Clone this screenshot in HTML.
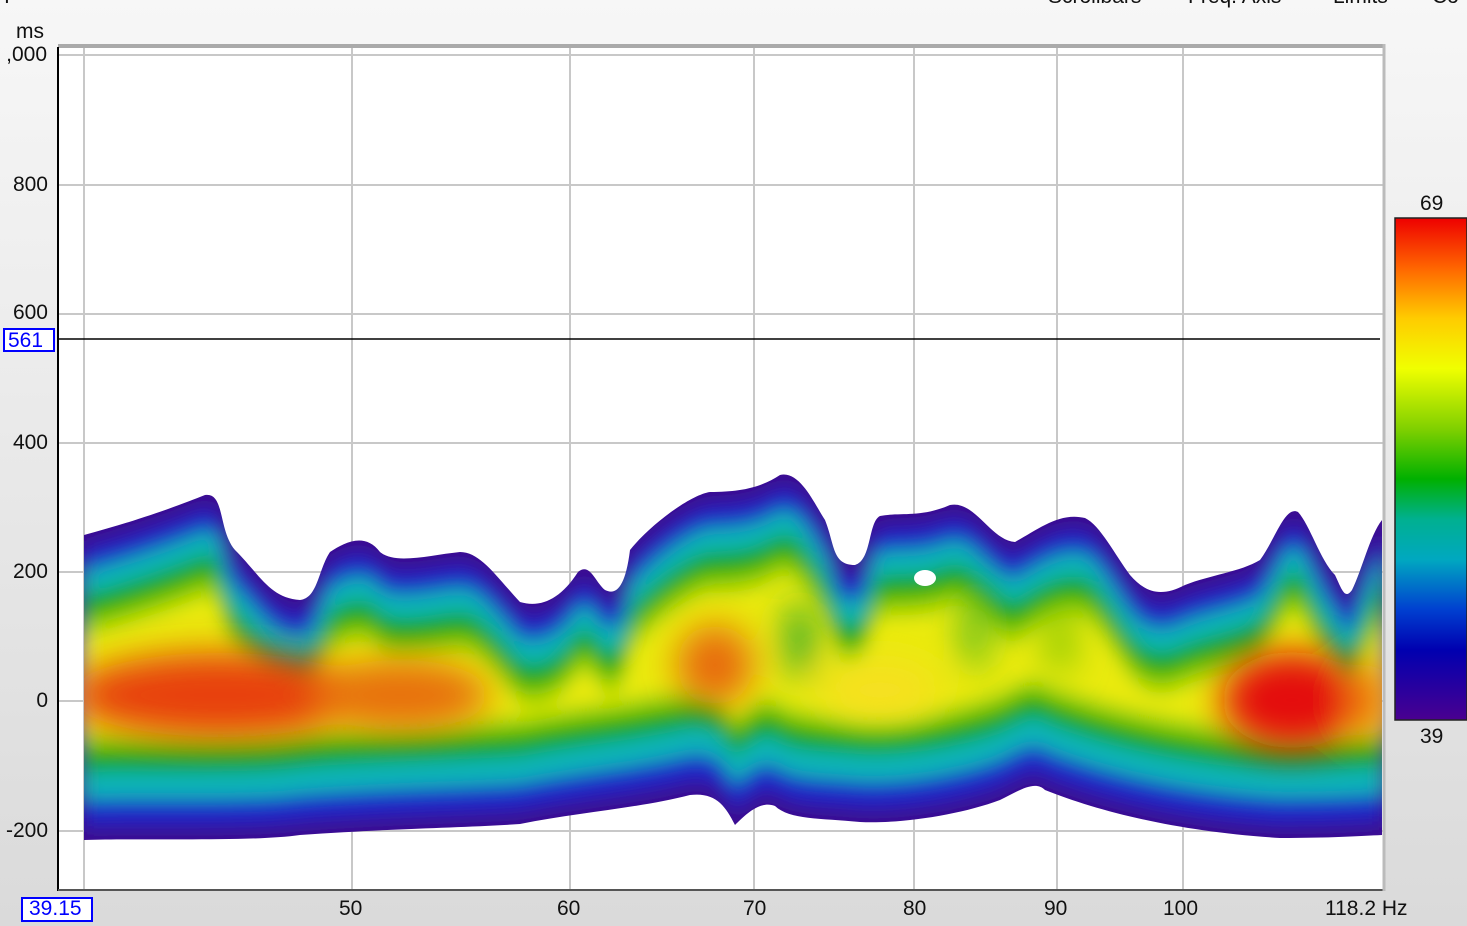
<!DOCTYPE html>
<html><head><meta charset="utf-8"><style>
html,body{margin:0;padding:0}
body{width:1467px;height:926px;overflow:hidden;background:linear-gradient(#f7f7f7,#dadada);font-family:"Liberation Sans",sans-serif;position:relative}
.t{position:absolute;font-size:21px;color:#111;line-height:24px}
</style></head><body>
<svg width="1467" height="926" style="position:absolute;left:0;top:0">
<defs>
<path id="top" d="M84,535 C140,520 180,505 205,495 C225,492 218,530 235,550 C260,575 270,598 300,600 C318,598 318,570 330,552 C345,542 365,532 380,552 C395,565 430,555 460,552 C480,552 495,575 520,602 C540,608 560,600 578,572 C590,562 595,582 605,590 C615,595 625,590 630,550 C650,525 690,495 710,492 C740,492 760,488 780,475 C800,470 815,505 825,520 C835,545 832,565 855,565 C872,560 868,522 880,516 C900,512 920,518 950,505 C975,500 990,540 1015,542 C1040,528 1060,512 1085,518 C1100,525 1115,555 1130,575 C1145,592 1160,598 1185,585 C1210,575 1240,572 1260,560 C1275,540 1285,505 1298,512 C1310,525 1320,560 1335,575 C1342,590 1345,600 1352,590 C1362,570 1370,535 1382,520 L1382,1000 L84,1000 Z"/>
<path id="bot" d="M84,840 C150,838 250,842 300,835 C400,828 460,828 520,824 C580,812 640,808 690,795 C715,792 725,805 735,825 C745,815 760,800 775,806 C790,820 820,818 860,822 C900,824 960,815 1000,800 C1020,790 1035,780 1045,790 C1100,812 1180,832 1280,838 C1330,838 1360,836 1382,835 L1382,400 L84,400 Z"/>
<clipPath id="outer"><path d="M84,535 C140,520 180,505 205,495 C225,492 218,530 235,550 C260,575 270,598 300,600 C318,598 318,570 330,552 C345,542 365,532 380,552 C395,565 430,555 460,552 C480,552 495,575 520,602 C540,608 560,600 578,572 C590,562 595,582 605,590 C615,595 625,590 630,550 C650,525 690,495 710,492 C740,492 760,488 780,475 C800,470 815,505 825,520 C835,545 832,565 855,565 C872,560 868,522 880,516 C900,512 920,518 950,505 C975,500 990,540 1015,542 C1040,528 1060,512 1085,518 C1100,525 1115,555 1130,575 C1145,592 1160,598 1185,585 C1210,575 1240,572 1260,560 C1275,540 1285,505 1298,512 C1310,525 1320,560 1335,575 C1342,590 1345,600 1352,590 C1362,570 1370,535 1382,520 L1382,835 C1360,836 1330,838 1280,838 C1180,832 1100,812 1045,790 C1035,780 1020,790 1000,800 C960,815 900,824 860,822 C820,818 790,820 775,806 C760,800 745,815 735,825 C725,805 715,792 690,795 C640,808 580,812 520,824 C460,828 400,828 300,835 C250,842 150,838 84,840 Z"/></clipPath>
<clipPath id="b10"><use href="#bot" transform="translate(0,-14)"/></clipPath>
<clipPath id="b35"><use href="#bot" transform="translate(0,-40)"/></clipPath>
<clipPath id="b60"><use href="#bot" transform="translate(0,-68)"/></clipPath>
<clipPath id="b82"><use href="#bot" transform="translate(0,-92)"/></clipPath>
<clipPath id="b98"><use href="#bot" transform="translate(0,-108)"/></clipPath>
<filter id="bl" x="-10%" y="-10%" width="120%" height="120%"><feGaussianBlur stdDeviation="9"/></filter>
<filter id="bl2" x="-50%" y="-50%" width="200%" height="200%"><feGaussianBlur stdDeviation="18"/></filter>
<linearGradient id="cb" x1="0" y1="0" x2="0" y2="1">
<stop offset="0" stop-color="#ee0000"/><stop offset="0.1" stop-color="#ff6600"/><stop offset="0.2" stop-color="#ffcc00"/><stop offset="0.3" stop-color="#f0ff00"/><stop offset="0.42" stop-color="#80d000"/><stop offset="0.52" stop-color="#00b000"/><stop offset="0.6" stop-color="#00b090"/><stop offset="0.68" stop-color="#00a8c0"/><stop offset="0.78" stop-color="#0040d0"/><stop offset="0.86" stop-color="#0000b0"/><stop offset="1" stop-color="#4a0090"/></linearGradient>
</defs>
<rect x="58" y="47" width="1325" height="843" fill="#fff"/>
<g stroke="#c8c8c8" stroke-width="2" fill="none">
<path d="M84,47V890M352,47V890M570,47V890M754,47V890M914,47V890M1057,47V890M1183,47V890"/>
<path d="M58,55H1383M58,185H1383M58,314H1383M58,443H1383M58,572H1383M58,701H1383M58,831H1383"/>
</g>
<g clip-path="url(#outer)">
<g filter="url(#bl)">
<rect x="60" y="400" width="1340" height="460" fill="#3a0a90"/>
<g clip-path="url(#b10)"><use href="#top" transform="translate(0,14)" fill="#1a28c8"/></g>
<g clip-path="url(#b35)"><use href="#top" transform="translate(0,36)" fill="#10b4b8"/></g>
<g clip-path="url(#b60)"><use href="#top" transform="translate(0,60)" fill="#18a818"/></g>
<g clip-path="url(#b82)"><use href="#top" transform="translate(0,84)" fill="#9ad000"/></g>
<g clip-path="url(#b98)"><use href="#top" transform="translate(0,102)" fill="#eaea10"/></g>
</g>
<g filter="url(#bl2)">
<ellipse cx="800" cy="640" rx="14" ry="40" fill="#20a030"/>
<ellipse cx="975" cy="630" rx="12" ry="40" fill="#40b020"/>
<ellipse cx="1060" cy="640" rx="12" ry="35" fill="#70c010"/>
<ellipse cx="220" cy="695" rx="150" ry="42" fill="#e84010"/>
<ellipse cx="400" cy="695" rx="90" ry="35" fill="#e87010"/>
<ellipse cx="715" cy="665" rx="38" ry="40" fill="#e86a10"/>
<ellipse cx="880" cy="690" rx="60" ry="30" fill="#f6e020"/>
<ellipse cx="1292" cy="700" rx="70" ry="48" fill="#e41010"/>
<ellipse cx="1370" cy="700" rx="20" ry="40" fill="#f08010"/>
</g>
<ellipse cx="925" cy="578" rx="11" ry="8" fill="#fff"/>
</g>
<line x1="58" y1="339" x2="1380" y2="339" stroke="#000" stroke-width="1.5"/>
<rect x="58" y="44" width="1326" height="4" fill="#aaa"/>
<line x1="58" y1="47" x2="58" y2="891" stroke="#000" stroke-width="2"/>
<line x1="58" y1="890" x2="1384" y2="890" stroke="#555" stroke-width="2"/>
<line x1="1384" y1="44" x2="1384" y2="891" stroke="#bbb" stroke-width="3"/>
<rect x="1395" y="218" width="72" height="502" fill="url(#cb)" stroke="#222" stroke-width="1.5"/>
<rect x="4" y="329" width="50" height="22" fill="#fff" stroke="#00f" stroke-width="2"/>
<rect x="22" y="898" width="70" height="23" fill="#fff" stroke="#00f" stroke-width="2"/>
</svg>
<div class="t" style="left:16px;top:20px">ms</div>
<div class="t" style="right:1420px;top:43px">,000</div>
<div class="t" style="right:1419px;top:173px">800</div>
<div class="t" style="right:1419px;top:301px">600</div>
<div class="t" style="left:8px;top:329px;color:#00f">561</div>
<div class="t" style="right:1419px;top:431px">400</div>
<div class="t" style="right:1419px;top:560px">200</div>
<div class="t" style="right:1419px;top:689px">0</div>
<div class="t" style="right:1419px;top:819px">-200</div>
<div class="t" style="left:29px;top:897px;color:#00f">39.15</div>
<div class="t" style="left:339px;top:897px">50</div>
<div class="t" style="left:557px;top:897px">60</div>
<div class="t" style="left:743px;top:897px">70</div>
<div class="t" style="left:903px;top:897px">80</div>
<div class="t" style="left:1044px;top:897px">90</div>
<div class="t" style="left:1163px;top:897px">100</div>
<div class="t" style="left:1325px;top:897px">118.2 Hz</div>
<div class="t" style="left:1420px;top:192px">69</div>
<div class="t" style="left:1420px;top:725px">39</div>
<div class="t" style="left:1048px;top:-15px">Scrollbars</div>
<div class="t" style="left:1188px;top:-15px">Freq. Axis</div>
<div class="t" style="left:1333px;top:-15px">Limits</div>
<div class="t" style="left:1432px;top:-15px">Co</div>
<div class="t" style="left:4px;top:-15px">I</div>
</body></html>
